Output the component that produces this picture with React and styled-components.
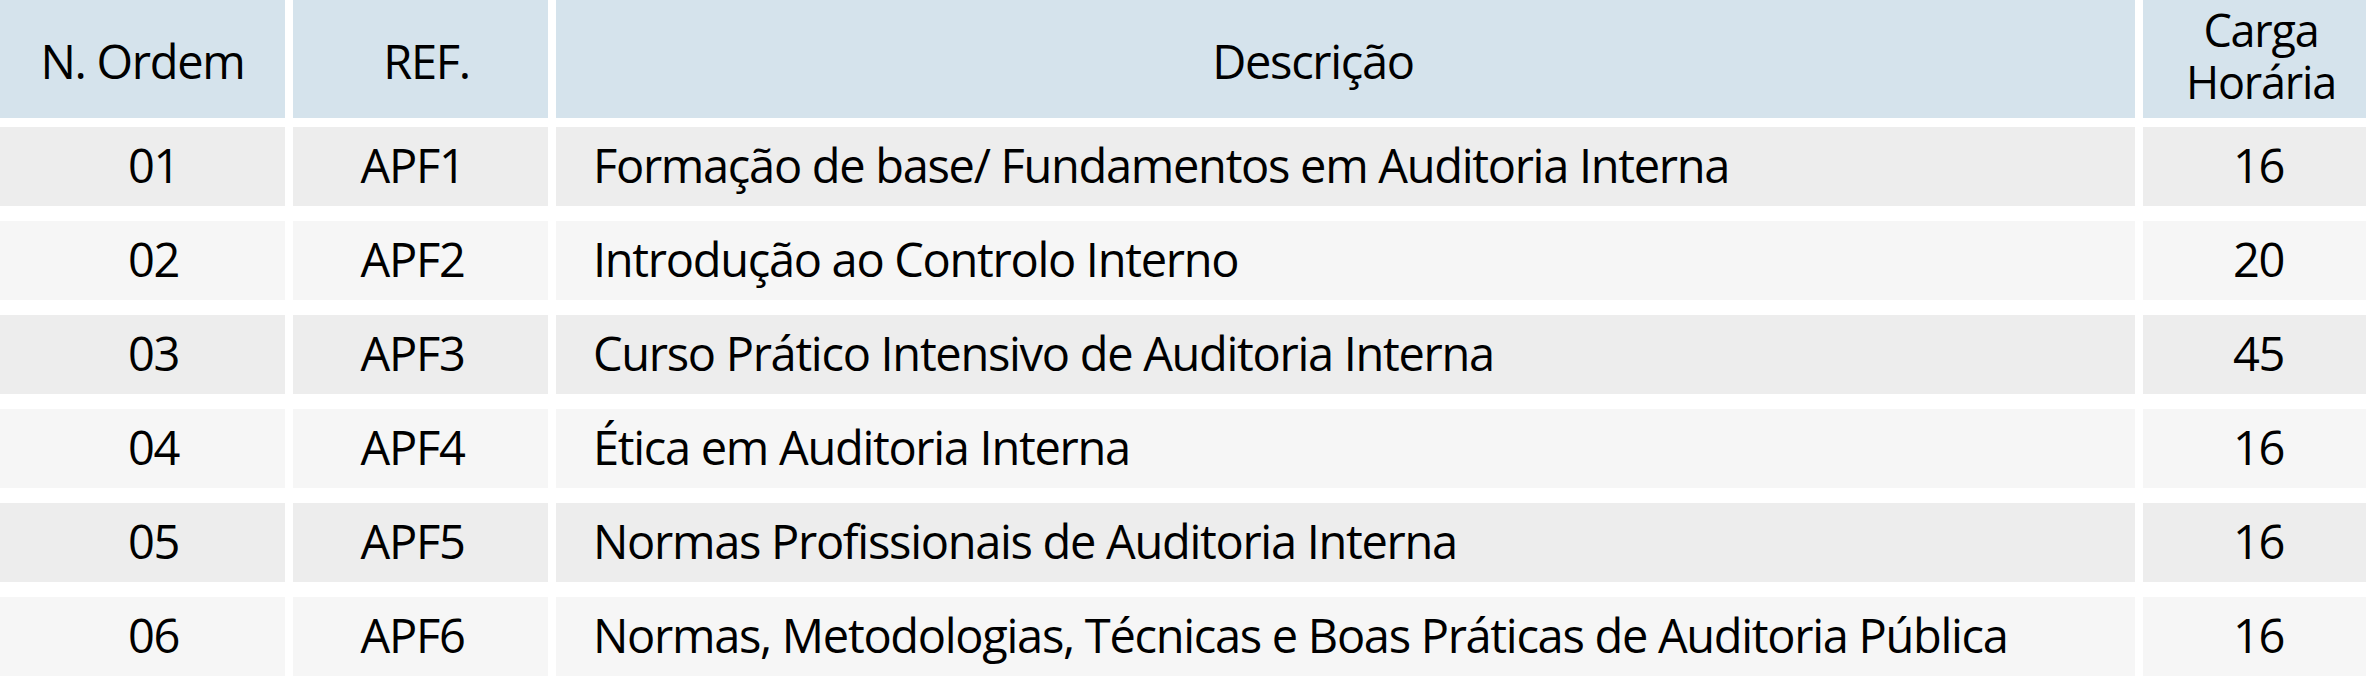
import React from "react";
import styled, { createGlobalStyle } from "styled-components";

const GlobalStyle = createGlobalStyle`
  html, body {
    margin: 0;
    padding: 0;
    background: #ffffff;
  }
  body {
    font-family: "Open Sans", "Noto Sans", "Liberation Sans", sans-serif;
    color: #000;
  }
`;

const COLS = "285px 255px 1579px 1fr";

const Table = styled.div`
  width: 2366px;
  height: 676px;
  display: flex;
  flex-direction: column;
  background: #ffffff;
  overflow: hidden;
`;

const HeaderRow = styled.div`
  display: grid;
  grid-template-columns: ${COLS};
  column-gap: 8px;
  height: 118px;
`;

const Body = styled.div`
  display: flex;
  flex-direction: column;
  row-gap: 15px;
  margin-top: 9px;
`;

const Row = styled.div`
  display: grid;
  grid-template-columns: ${COLS};
  column-gap: 8px;
  height: 79px;
`;

const HeadCell = styled.div`
  background: #d5e3ec;
  display: flex;
  flex-direction: column;
  align-items: center;
  justify-content: center;
  text-align: center;
  white-space: nowrap;
  font-size: ${(p) => (p.$small ? "45px" : "47px")};
  line-height: ${(p) => (p.$small ? "52px" : "normal")};
  letter-spacing: ${(p) => (p.$small ? "-1.2px" : "-1.3px")};
  padding: ${(p) => p.$pad || "4px 0 0 0"};
  box-sizing: border-box;
`;

const HeadLine = styled.span`
  display: block;
`;

const Cell = styled.div`
  background: ${(p) => (p.$odd ? "#ededed" : "#f6f6f6")};
  display: flex;
  align-items: center;
  justify-content: ${(p) => (p.$left ? "flex-start" : "center")};
  font-size: 47px;
  letter-spacing: -1.3px;
  white-space: nowrap;
  padding: ${(p) => p.$pad || "0"};
  box-sizing: border-box;
`;

const rows = [
  ["01", "APF1", "Formação de base/ Fundamentos em Auditoria Interna", "16"],
  ["02", "APF2", "Introdução ao Controlo Interno", "20"],
  ["03", "APF3", "Curso Prático Intensivo de Auditoria Interna", "45"],
  ["04", "APF4", "Ética em Auditoria Interna", "16"],
  ["05", "APF5", "Normas Profissionais de Auditoria Interna", "16"],
  ["06", "APF6", "Normas, Metodologias, Técnicas e Boas Práticas de Auditoria Pública", "16"],
];

export default function App() {
  return (
    <>
      <GlobalStyle />
      <Table>
        <HeaderRow>
          <HeadCell>N. Ordem</HeadCell>
          <HeadCell $pad="4px 0 0 12px">REF.</HeadCell>
          <HeadCell $pad="3px 65px 0 0">Descrição</HeadCell>
          <HeadCell $small $pad="0 0 7px 13px">
            <HeadLine>Carga</HeadLine>
            <HeadLine>Horária</HeadLine>
          </HeadCell>
        </HeaderRow>
        <Body>
          {rows.map((r, i) => (
            <Row key={r[0]}>
              <Cell $odd={i % 2 === 0} $pad="0 0 3px 22px">{r[0]}</Cell>
              <Cell $odd={i % 2 === 0} $pad="0 16px 3px 0">{r[1]}</Cell>
              <Cell $odd={i % 2 === 0} $left $pad="0 0 3px 37px">{r[2]}</Cell>
              <Cell $odd={i % 2 === 0} $pad="0 0 3px 8px">{r[3]}</Cell>
            </Row>
          ))}
        </Body>
      </Table>
    </>
  );
}
